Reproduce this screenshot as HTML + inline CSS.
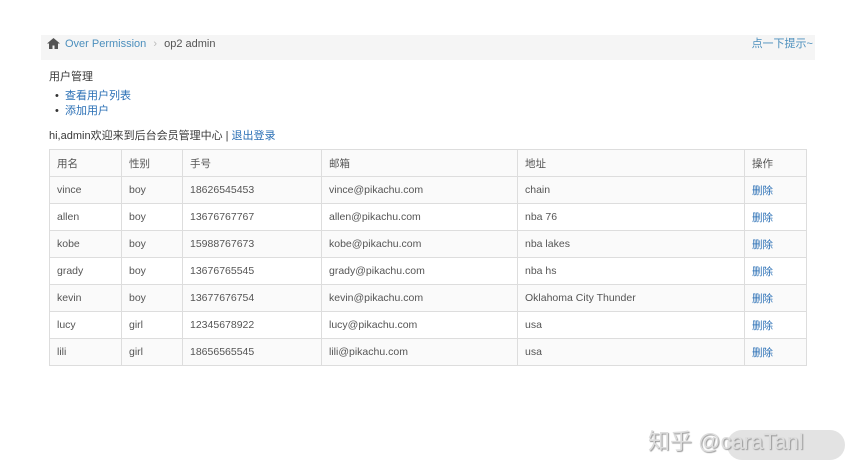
<!DOCTYPE html>
<html><head><meta charset="utf-8"><style>
body{margin:0;width:856px;height:472px;background:#fff;font-family:"Liberation Sans","Noto Sans CJK SC",sans-serif;font-size:11px;color:#393939;position:relative;overflow:hidden}
.bc{position:absolute;left:41px;top:35px;width:774px;height:25px;line-height:19px;background:#f5f5f5}
.bc .t{position:absolute;left:24px;top:0;color:#555}
.bc a{color:#4c8fbd;text-decoration:none}
.bc .r{position:absolute;right:2px;top:0;color:#4c8fbd}
a{color:#2a6fb5;text-decoration:none}
.abs{position:absolute}
table{position:absolute;left:49px;top:149px;width:758px;border-collapse:collapse}
td{border:1px solid #ddd;height:26px;padding:0 0 0 7px;color:#555;font-size:10.5px}
tr:nth-child(even) td{background:#fafafa}
tr:first-child td{background:#fafafa}
.wm{position:absolute;left:648px;top:424px;font-size:22px;color:#ddd;text-shadow:1px 1px 1px #999}
.wm2{position:absolute;left:727px;top:430px;width:118px;height:30px;border-radius:15px;background:rgba(200,200,200,.5)}
</style></head><body>
<div class="bc">
<svg class="abs" style="left:6px;top:3px" width="13" height="11" viewBox="0 0 13 11"><path d="M6.5 0L0 5.5h2V11h3.5V7.5h2V11H11V5.5h2z" fill="#555"/></svg>
<div class="t"><a>Over Permission</a> <span style="color:#bbb;margin:0 4px">›</span> op2 admin</div>
<div class="r">点一下提示~</div>
</div>
<div class="abs" style="left:49px;top:68px">用户管理</div>
<div class="abs" style="left:55px;top:89px;line-height:15px">
<div><span style="color:#333">•</span>&nbsp;&nbsp;<a>查看用户列表</a></div>
<div><span style="color:#333">•</span>&nbsp;&nbsp;<a>添加用户</a></div>
</div>
<div class="abs" style="left:49px;top:127px">hi,admin欢迎来到后台会员管理中心 | <a>退出登录</a></div>
<table>
<colgroup><col style="width:72px"><col style="width:61px"><col style="width:139px"><col style="width:196px"><col style="width:227px"><col></colgroup>
<tr><td>用名</td><td>性别</td><td>手号</td><td>邮箱</td><td>地址</td><td>操作</td></tr>
<tr><td>vince</td><td>boy</td><td>18626545453</td><td>vince@pikachu.com</td><td>chain</td><td><a>删除</a></td></tr>
<tr><td>allen</td><td>boy</td><td>13676767767</td><td>allen@pikachu.com</td><td>nba 76</td><td><a>删除</a></td></tr>
<tr><td>kobe</td><td>boy</td><td>15988767673</td><td>kobe@pikachu.com</td><td>nba lakes</td><td><a>删除</a></td></tr>
<tr><td>grady</td><td>boy</td><td>13676765545</td><td>grady@pikachu.com</td><td>nba hs</td><td><a>删除</a></td></tr>
<tr><td>kevin</td><td>boy</td><td>13677676754</td><td>kevin@pikachu.com</td><td>Oklahoma City Thunder</td><td><a>删除</a></td></tr>
<tr><td>lucy</td><td>girl</td><td>12345678922</td><td>lucy@pikachu.com</td><td>usa</td><td><a>删除</a></td></tr>
<tr><td>lili</td><td>girl</td><td>18656565545</td><td>lili@pikachu.com</td><td>usa</td><td><a>删除</a></td></tr>
</table>
<div class="wm2"></div>
<div class="wm">知乎 @caraTanl</div>
</body></html>
